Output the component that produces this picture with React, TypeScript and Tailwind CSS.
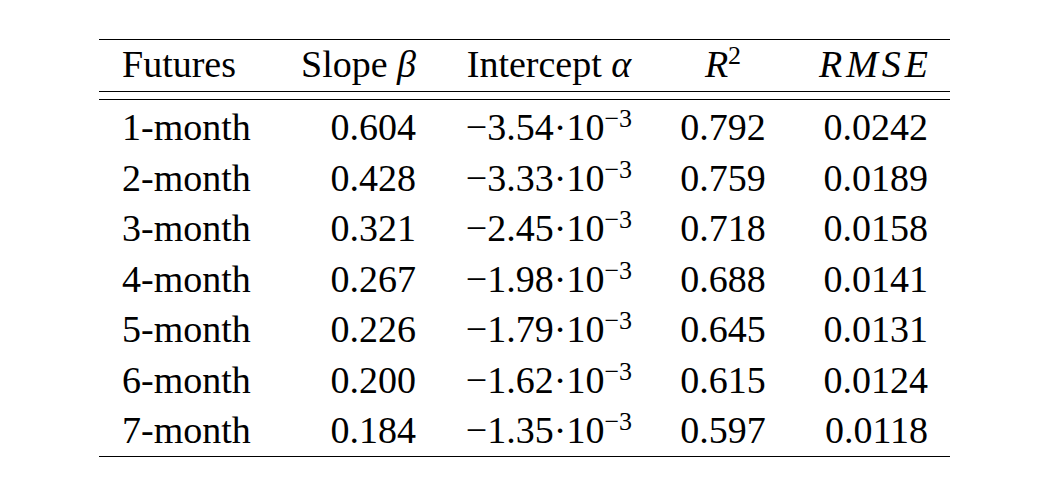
import type React from "react";

const rows: [string, string, string, string, string][] = [
  ["1-month", "0.604", "3.54", "0.792", "0.0242"],
  ["2-month", "0.428", "3.33", "0.759", "0.0189"],
  ["3-month", "0.321", "2.45", "0.718", "0.0158"],
  ["4-month", "0.267", "1.98", "0.688", "0.0141"],
  ["5-month", "0.226", "1.79", "0.645", "0.0131"],
  ["6-month", "0.200", "1.62", "0.615", "0.0124"],
  ["7-month", "0.184", "1.35", "0.597", "0.0118"],
];

const grid = "grid grid-cols-[195px_124px_262px_86px_184px]";

function Sup({ children }: { children: React.ReactNode }) {
  return <span className="text-[26px] leading-none align-[13px]">{children}</span>;
}

export default function App() {
  return (
    <div className="w-[1048px] h-[478px] bg-white text-black font-['Liberation_Serif',serif] text-[38px]">
      <div className="ml-[99px] pt-[39px] w-[851px]">
        <div className="border-t border-black" />
        <div className={`${grid} leading-[48px] mb-[3px]`}>
          <div className="pl-[23px]">Futures</div>
          <div className="text-right pr-[2px]">
            Slope <i>β</i>
          </div>
          <div className="text-center">
            Intercept <i>α</i>
          </div>
          <div className="text-center">
            <i>R</i>
            <Sup>2</Sup>
          </div>
          <div className="text-right pr-[18px] italic tracking-[4px]">RMSE</div>
        </div>
        <div className="border-t border-black" />
        <div className="h-[7px]" />
        <div className="border-t border-black" />
        <div className="leading-[50.5px] pt-[2px]">
          {rows.map(([name, slope, icpt, r2, rmse]) => (
            <div key={name} className={grid}>
              <div className="pl-[23px]">{name}</div>
              <div className="text-right pr-[2px]">{slope}</div>
              <div className="text-center">
                −{icpt}·10
                <Sup>−3</Sup>
              </div>
              <div className="text-center">{r2}</div>
              <div className="text-right pr-[22px]">{rmse}</div>
            </div>
          ))}
        </div>
        <div className="border-t border-black" />
      </div>
    </div>
  );
}
